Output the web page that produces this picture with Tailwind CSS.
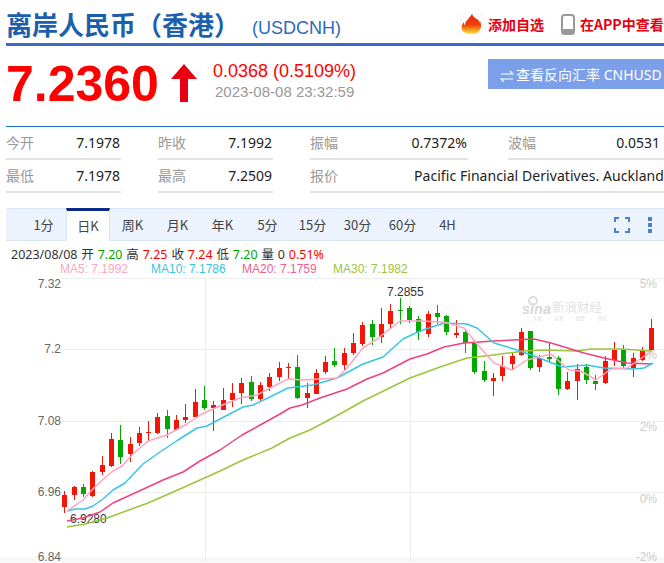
<!DOCTYPE html>
<html lang="zh-CN">
<head>
    <meta charset="UTF-8">
    <meta name="viewport" content="width=device-width, initial-scale=1.0">
    <title>离岸人民币（香港）</title>
    <script src="https://cdn.jsdelivr.net/npm/@tailwindcss/browser@4"></script>
</head>
<body class="bg-white w-[664px] h-[563px] overflow-hidden font-['Liberation_Sans','Noto_Sans_CJK_SC',sans-serif]">

    <!-- Title -->
    <div class="ml-[6px] h-[46px] border-b-[3px] border-[#3c68c6] flex items-center pb-[1px] whitespace-nowrap">
        <h1 class="mt-[5px] text-[26px] leading-[32px] font-bold text-[#1c5fae] font-['Noto_Sans_CJK_SC',sans-serif]">离岸人民币（香港）</h1>
        <span class="ml-[12px] mt-[14px] text-[18px] text-[#2b6cb8]">(USDCNH)</span>
        <div class="ml-auto flex items-center text-[14px] font-bold text-[#e60012] font-['Noto_Sans_CJK_SC',sans-serif] mt-[6px]">
            <svg width="24" height="22" viewBox="0 0 24 22" class="mr-[5px]">
                <defs>
                    <linearGradient id="flame" x1="0" y1="0" x2="0" y2="1">
                        <stop offset="0" stop-color="#e8200c"/>
                        <stop offset="0.55" stop-color="#f0420c"/>
                        <stop offset="0.8" stop-color="#f9a01c"/>
                        <stop offset="1" stop-color="#fbe04a"/>
                    </linearGradient>
                </defs>
                <rect width="24" height="22" fill="#fafafa"/>
                <path d="M13 1c1 4 6 5 7 7 0 1 0 2-1 3 1-1 1-2 2-3 2 4 1 8-1 10-2 3-5 3-8 3s-7-1-9-4c-1-3 0-6 2-8 0 2 0 3 1 3 0-4 4-6 7-11z" fill="url(#flame)"/>
            </svg>
            <span class="mr-[17px]">添加自选</span>
            <svg width="14" height="21" viewBox="0 0 14 21" class="mr-[5px]">
                <rect x="1" y="1" width="12" height="19" rx="2.5" fill="none" stroke="#999" stroke-width="2"/>
                <rect x="1" y="15" width="12" height="5" rx="1.5" fill="#999"/>
            </svg>
            <span class="w-[84px] overflow-hidden">在APP中查看</span>
        </div>
    </div>

    <!-- Price -->
    <div class="h-[80px] flex items-start whitespace-nowrap">
        <div class="ml-[6px] mt-[10px] text-[50px] leading-[56px] font-bold text-[#ff0000] w-[165px]">7.2360</div>
        <svg width="26" height="38" viewBox="0 0 26 38" class="mt-[18px]">
            <path d="M13 0 26 15H17V38H9V15H0Z" fill="#e60012"/>
        </svg>
        <div class="ml-[16px] mt-[15px]">
            <div class="text-[18px] leading-[21px] text-[#ff0000]">0.0368 <span>(0.5109%)</span></div>
            <div class="ml-[2px] text-[15px] leading-[20px] text-[#999999]">2023-08-08 23:32:59</div>
        </div>
        <div class="ml-auto mt-[13px] w-[176px] h-[30px] bg-[#7b9fe9] flex items-center pl-[12px] overflow-hidden text-[14px] text-white font-['Noto_Sans',sans-serif]">
            <svg width="14" height="12" viewBox="0 0 14 12" class="mr-[2px] mt-[3px] shrink-0" fill="none" stroke="#ffffff" stroke-width="1.2">
                <path d="M1 4H13L10 1"/>
                <path d="M13 9H1L4 12"/>
            </svg>
            <span class="font-['Noto_Sans','Noto_Sans_CJK_SC',sans-serif]">查看反向汇率 CNHUSD</span>
        </div>
    </div>

    <!-- Quote table -->
    <div class="ml-[6px] border-t border-[#1a73d0] grid grid-cols-[115px_115px_158px_159px] gap-x-[37px] text-[14px] whitespace-nowrap font-['Noto_Sans','Noto_Sans_CJK_SC',sans-serif]">
        <div class="h-[33px] border-b-2 border-[#e3e3e3] flex items-center justify-between"><span class="text-[#999999]">今开</span><span class="text-[#222222] mr-[1px]">7.1978</span></div>
        <div class="h-[33px] border-b-2 border-[#e3e3e3] flex items-center justify-between"><span class="text-[#999999]">昨收</span><span class="text-[#222222] mr-[1px]">7.1992</span></div>
        <div class="h-[33px] border-b-2 border-[#e3e3e3] flex items-center justify-between"><span class="text-[#999999]">振幅</span><span class="text-[#222222] mr-[1px]">0.7372%</span></div>
        <div class="h-[33px] border-b-2 border-[#e3e3e3] flex items-center justify-between ml-[3px] pr-[4px]"><span class="text-[#999999]">波幅</span><span class="text-[#222222]">0.0531</span></div>
        <div class="h-[33px] border-b-2 border-[#e3e3e3] flex items-center justify-between"><span class="text-[#999999]">最低</span><span class="text-[#222222] mr-[1px]">7.1978</span></div>
        <div class="h-[33px] border-b-2 border-[#e3e3e3] flex items-center justify-between"><span class="text-[#999999]">最高</span><span class="text-[#222222] mr-[1px]">7.2509</span></div>
        <div class="col-span-2 h-[33px] border-b-2 border-[#e3e3e3] flex items-center justify-between"><span class="text-[#999999]">报价</span><span class="text-[#222222] tracking-[0.06px]">Pacific Financial Derivatives. Auckland</span></div>
    </div>

    <!-- Period tabs -->
    <div class="ml-[6px] mt-[15px] h-[33px] bg-[#edf3fc] border-y border-[#d9e4f4] flex items-stretch pl-[15px] text-[13px] text-[#444444] font-['Noto_Sans_CJK_SC',sans-serif] relative">
        <div class="w-[45px] flex items-center justify-center">1分</div>
        <div class="w-[44px] -mt-px -mb-px bg-white border-t-[3px] border-t-[#0a2a8a] border-x border-x-[#d9e4f4] flex items-center justify-center">日K</div>
        <div class="w-[45px] flex items-center justify-center">周K</div>
        <div class="w-[45px] flex items-center justify-center">月K</div>
        <div class="w-[45px] flex items-center justify-center">年K</div>
        <div class="w-[45px] flex items-center justify-center">5分</div>
        <div class="w-[45px] flex items-center justify-center">15分</div>
        <div class="w-[45px] flex items-center justify-center">30分</div>
        <div class="w-[45px] flex items-center justify-center">60分</div>
        <div class="w-[45px] flex items-center justify-center">4H</div>
        <div class="ml-auto flex items-center mr-[12px]">
            <svg width="16" height="16" viewBox="0 0 16 16" fill="none" stroke="#4a80cc" stroke-width="2">
                <path d="M1 5V1H5M11 1H15V5M15 11V15H11M5 15H1V11"/>
            </svg>
            <div class="ml-[18px] flex flex-col gap-[2px]">
                <span class="block w-[4px] h-[4px] bg-[#4a80cc]"></span>
                <span class="block w-[4px] h-[4px] bg-[#4a80cc]"></span>
                <span class="block w-[4px] h-[4px] bg-[#4a80cc]"></span>
            </div>
        </div>
    </div>

    <!-- Chart legends -->
    <div class="h-[36px] text-[12px] leading-[15px] whitespace-nowrap pt-[6px]">
        <div class="pl-[11px] text-[12.5px] [word-spacing:0.6px] text-[#333333] font-['Noto_Sans','Noto_Sans_CJK_SC',sans-serif]">2023/08/08 开 <span class="text-[#00a800]">7.20</span> 高 <span class="text-[#ff0000]">7.25</span> 收 <span class="text-[#ff0000]">7.24</span> 低 <span class="text-[#00a800]">7.20</span> 量 0 <span class="text-[#ff0000]">0.51%</span></div>
        <div class="pl-[60px] flex">
            <span class="w-[91px] text-[#fba6c2]">MA5: 7.1992</span>
            <span class="w-[91px] text-[#38c5e0]">MA10: 7.1786</span>
            <span class="w-[91px] text-[#f0608f]">MA20: 7.1759</span>
            <span class="text-[#9bc53a]">MA30: 7.1982</span>
        </div>
    </div>

    <!-- K line chart -->
    <svg id="chart" width="664" height="287" viewBox="0 276 664 287" class="block" font-family="'Liberation Sans', sans-serif" font-size="12">
        <defs>
            <linearGradient id="fade" x1="0" y1="0" x2="0" y2="1">
                <stop offset="0" stop-color="#f6f6f6" stop-opacity="0"/>
                <stop offset="0.4" stop-color="#f6f6f6"/>
                <stop offset="1" stop-color="#fbfbfb"/>
            </linearGradient>
        </defs>
        <rect x="0" y="555" width="664" height="8" fill="url(#fade)"/>
        <g stroke="#eeeeee" stroke-width="1" shape-rendering="crispEdges">
            <path d="M62 277.5H664M62 348.5H664M62 420.5H664M62 491.5H664"/>
            <path d="M205.5 277V560M410.5 277V560"/>
        </g>
        <g fill="#666666" text-anchor="end">
            <text x="61" y="287">7.32</text>
            <text x="61" y="352">7.2</text>
            <text x="61" y="424">7.08</text>
            <text x="61" y="495">6.96</text>
            <text x="61" y="560">6.84</text>
        </g>
        <g fill="#cccccc" text-anchor="end">
            <text x="657" y="287">5%</text>
            <text x="657" y="358">4%</text>
            <text x="657" y="430">2%</text>
            <text x="657" y="502">0%</text>
            <text x="657" y="560">-2%</text>
        </g>
        <!-- watermark -->
        <g>
            <circle cx="533" cy="300" r="4" fill="none" stroke="#dddddd" stroke-width="2"/>
            <text x="522" y="313" font-size="14.5" font-weight="bold" font-style="italic" fill="#d8d8d8">sina</text>
            <text x="552" y="311" font-size="12.5" fill="#e2e2e2" font-family="'Noto Sans CJK SC', sans-serif">新浪财经</text>
            <text x="533" y="319" font-size="4.5" word-spacing="3" fill="#dddddd" font-family="'Noto Sans CJK SC', sans-serif">头条 · 宏观 · 股票 · 研究</text>
        </g>
        <text x="387" y="295" fill="#333333">7.2855</text>
        <text x="70" y="522" fill="#333333">6.9280</text>
        <g id="candles" shape-rendering="crispEdges"></g>
        <g id="lines" fill="none" stroke-width="1.5" stroke-linejoin="round"></g>
    </svg>

    <script>
        // [high, body top, body bottom, low, up?]
        const candles = [
            [490,494,506,512,1],[485,486,494,499,1],[483,486,493,496,0],[470,471,495,496,1],
            [455,464,471,474,1],[432,438,465,466,1],[424,439,456,463,0],[436,443,453,461,1],
            [426,432,442,445,1],[420,431,432,441,1],[412,416,432,433,1],[409,415,428,437,0],
            [414,419,429,429,1],[403,416,419,422,1],[388,401,416,416,1],[385,399,407,409,0],
            [400,404,407,430,1],[387,399,409,409,1],[382,392,399,406,1],[377,382,392,403,1],
            [375,381,398,400,0],[381,384,398,400,1],[372,376,386,390,1],[361,367,376,380,1],
            [362,366,367,379,1],[354,366,397,398,0],[382,392,397,407,1],[368,372,393,393,1],
            [355,361,371,373,1],[347,360,364,366,0],[347,352,364,369,1],[332,342,352,354,1],
            [321,324,343,345,1],[319,323,336,344,0],[307,323,336,342,1],[303,310,323,328,1],
            [297,309,310,323,0],[305,307,319,322,0],[315,318,331,339,0],[310,313,333,336,1],
            [304,312,316,323,0],[314,315,331,334,0],[319,332,334,337,1],[328,331,342,352,0],
            [340,342,371,373,0],[360,370,379,381,0],[372,377,380,395,1],[355,365,375,380,1],
            [351,355,363,368,1],[327,331,354,355,1],[330,330,367,369,0],[354,357,366,371,1],
            [341,356,358,362,0],[355,357,388,394,0],[371,380,388,389,1],[363,368,380,399,1],
            [363,366,379,383,0],[374,380,383,389,0],[355,360,382,383,1],[341,349,359,365,1],
            [344,349,365,367,0],[352,357,367,376,1],[346,350,359,360,1],[318,327,349,350,1]
        ];

        const lines = {
            '#9bc53a': '67,526 85,523 107,517 148,502 180,488 220,470 243,459 272,447 290,437 310,429 340,413 363,400 410,377 440,366 467,357 494,354 524,350 544,349 577,350 591,348 621,348 652,350',
            '#f0417f': '67,520 83,517 100,511 113,502 148,486 163,479 183,471 200,460 220,449 242,434 262,423 280,413 290,407 302,404 320,397 347,388 367,378 383,372 410,358 427,353 444,346 464,342 494,340 534,338 551,342 584,352 604,357 627,362 652,363',
            '#38c6e0': '67,510 75,508 85,508 93,505 103,498 113,489 125,482 143,463 160,451 178,439 197,427 207,425 220,418 243,406 253,404 270,396 288,387 313,384 337,377 363,363 383,356 403,338 420,330 444,322 467,323 477,327 494,342 514,348 537,356 562,366 587,364 604,367 634,368 644,367 653,362',
            '#fda6c2': '67,510 83,499 90,491 100,481 113,470 122,465 133,453 148,440 167,434 187,423 200,414 213,408 220,405 240,397 257,394 270,387 288,378 303,379 320,378 337,377 347,367 363,347 377,338 400,320 420,320 444,321 464,327 477,343 494,362 512,369 527,359 551,353 569,369 581,370 596,379 611,368 627,367 652,350'
        };

        const svgNS = 'http://www.w3.org/2000/svg';
        function add(parent, tag, attrs) {
            const el = document.createElementNS(svgNS, tag);
            for (const k in attrs) el.setAttribute(k, attrs[k]);
            parent.appendChild(el);
        }

        const candleGroup = document.getElementById('candles');
        candles.forEach((c, i) => {
            const x = Math.round(64.3 + 9.317 * i);
            const color = c[4] ? '#f31505' : '#00a800';
            add(candleGroup, 'rect', { x: x, y: c[0], width: 1, height: c[3] - c[0], fill: color });
            add(candleGroup, 'rect', { x: x - 2, y: c[1], width: 5, height: Math.max(c[2] - c[1], 1), fill: color });
        });

        const lineGroup = document.getElementById('lines');
        for (const color in lines) {
            add(lineGroup, 'polyline', { points: lines[color], stroke: color });
        }
    </script>
</body>
</html>
